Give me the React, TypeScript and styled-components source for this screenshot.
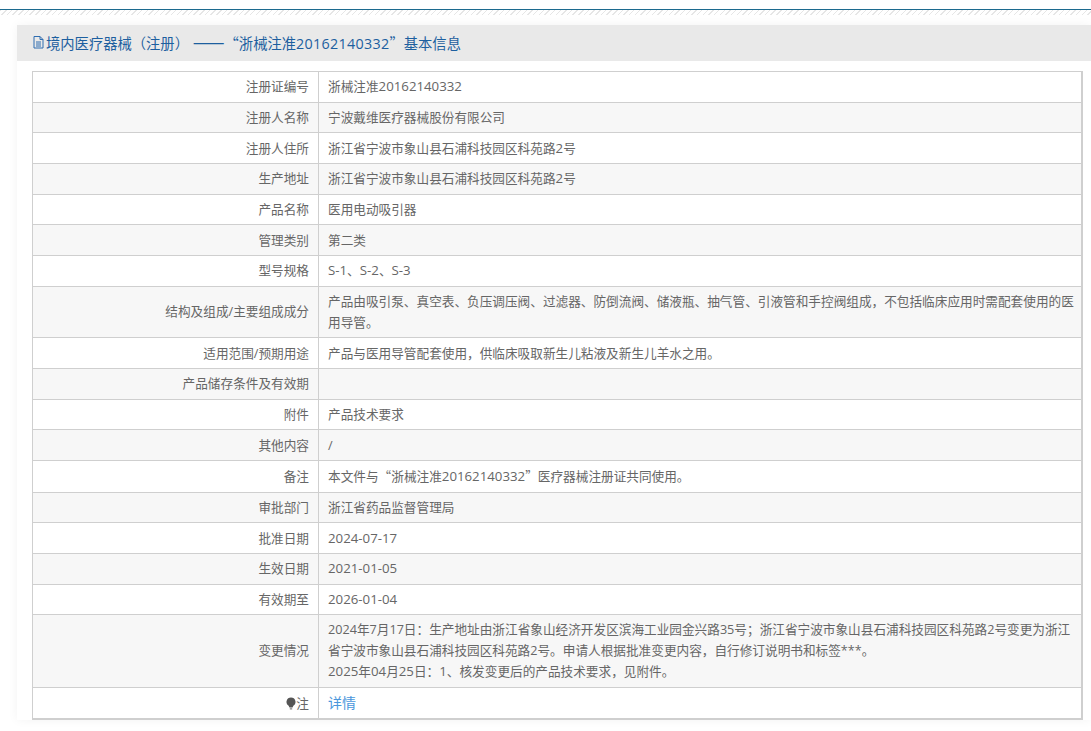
import React from "react";
import styled, { createGlobalStyle } from "styled-components";

type InfoRow = {
  label: React.ReactNode;
  value: React.ReactNode;
};

const GlobalStyle = createGlobalStyle`
  html, body {
    margin: 0;
    padding: 0;
    background: #fff;
    overflow: hidden;
    font-family: "Open Sans", "Noto Sans CJK SC", sans-serif;
  }
`;

const Page = styled.div`
  height: 731px;
  overflow: hidden;
  padding-top: 9px;
  box-sizing: border-box;
`;

const TopLine = styled.div`
  height: 1px;
  background: #1c6a8f;
`;

const Hatch = styled.div`
  height: 5px;
  background: repeating-linear-gradient(135deg, #e6e6e6 0 1px, #fff 1px 4px);
`;

const Main = styled.div`
  margin-left: 17px;
  margin-top: 10px;
  background: #fff;
  box-shadow: 0 0 10px rgba(0, 0, 0, 0.05);
`;

const PanelHeader = styled.div`
  height: 36px;
  background: #e9e9e9;
  display: flex;
  align-items: center;
  padding: 0 0 2px 15px;
  box-sizing: border-box;
  gap: 1px;
  color: #1d5f9f;
  font-size: 14.3px;
  white-space: pre;
`;

const HeaderDigits = styled.span`
  letter-spacing: 0.32px;
`;

const Dash = styled.span`
  font-family: "Noto Sans CJK SC", sans-serif;
  font-size: 19px;
  line-height: 1;
`;

const Quote = styled.span`
  font-family: "Noto Sans CJK SC", sans-serif;
`;

const Latin = styled.span`
  font-size: 13.25px;
`;

const Table = styled.table`
  margin: 10px 8px 0 15px;
  width: 1051px;
  border-collapse: collapse;
  table-layout: fixed;
  border: 1px solid #cfcfcf;
  border-right-width: 2px;
  border-bottom-width: 2px;
  font-size: 12.65px;
  line-height: 21px;
  color: #666;
`;

const Row = styled.tr<{ $shaded: boolean }>`
  background: ${(p) => (p.$shaded ? "#f7f7f7" : "#fff")};
`;

const LabelCell = styled.td`
  width: 286px;
  box-sizing: border-box;
  border: 1px solid #cfcfcf;
  padding: 4.33px 9px;
  text-align: right;
`;

const ValueCell = styled.td`
  border: 1px solid #cfcfcf;
  padding: 4.33px 6px 4.33px 9px;
  text-align: left;
`;

const DetailLink = styled.a`
  color: #4a97dc;
  font-size: 14px;
  text-decoration: none;
`;

const DocIcon = () => (
  <svg width="13" height="14" viewBox="0 0 13 14" fill="none" stroke="#2f6db0" strokeWidth="1">
    <path d="M2 1.5h6l3 3v8.5H2z" />
    <path d="M8 1.5v3h3M4 7h5M4 9h5M4 11h5" />
  </svg>
);

const BulbIcon = () => (
  <svg width="10" height="13" viewBox="0 0 10 13" style={{ verticalAlign: "-2px" }}>
    <path d="M5 0.5a4.5 4.5 0 0 1 2.4 8.3L6.5 10.5h-3L2.6 8.8A4.5 4.5 0 0 1 5 0.5z" fill="#555" />
    <path d="M3.8 11.2h2.4v1.3H3.8z" fill="#888" />
  </svg>
);

// digits and latin letters run a little wider than the chinese text around them
const mixed = (text: string) =>
  text.split(/([0-9A-Za-z\-*]+)/).map((part, i) => (i % 2 ? <Latin key={i}>{part}</Latin> : part));

const rows: InfoRow[] = [
  { label: "注册证编号", value: mixed("浙械注准20162140332") },
  { label: "注册人名称", value: "宁波戴维医疗器械股份有限公司" },
  { label: "注册人住所", value: mixed("浙江省宁波市象山县石浦科技园区科苑路2号") },
  { label: "生产地址", value: mixed("浙江省宁波市象山县石浦科技园区科苑路2号") },
  { label: "产品名称", value: "医用电动吸引器" },
  { label: "管理类别", value: "第二类" },
  { label: "型号规格", value: mixed("S-1、S-2、S-3") },
  {
    label: "结构及组成/主要组成成分",
    value:
      "产品由吸引泵、真空表、负压调压阀、过滤器、防倒流阀、储液瓶、抽气管、引液管和手控阀组成，不包括临床应用时需配套使用的医用导管。",
  },
  { label: "适用范围/预期用途", value: "产品与医用导管配套使用，供临床吸取新生儿粘液及新生儿羊水之用。" },
  { label: "产品储存条件及有效期", value: "" },
  { label: "附件", value: "产品技术要求" },
  { label: "其他内容", value: "/" },
  {
    label: "备注",
    value: (
      <>
        本文件与<Quote>“</Quote>
        {mixed("浙械注准20162140332")}
        <Quote>”</Quote>医疗器械注册证共同使用。
      </>
    ),
  },
  { label: "审批部门", value: "浙江省药品监督管理局" },
  { label: "批准日期", value: mixed("2024-07-17") },
  { label: "生效日期", value: mixed("2021-01-05") },
  { label: "有效期至", value: mixed("2026-01-04") },
  {
    label: "变更情况",
    value: (
      <>
        2024年7月17日：生产地址由浙江省象山经济开发区滨海工业园金兴路35号；浙江省宁波市象山县石浦科技园区科苑路2号变更为浙江省宁波市象山县石浦科技园区科苑路2号。申请人根据批准变更内容，自行修订说明书和标签***。
        <br />
        {mixed("2025年04月25日：1、核发变更后的产品技术要求，见附件。")}
      </>
    ),
  },
  {
    label: (
      <>
        <BulbIcon />注
      </>
    ),
    value: <DetailLink href="#">详情</DetailLink>,
  },
];

const App: React.FC = () => {
  return (
    <Page>
      <GlobalStyle />
      <TopLine />
      <Hatch />
      <Main>
        <PanelHeader>
          <DocIcon />
          <span>
            境内医疗器械（注册） <Dash>——</Dash>
            <Quote>“</Quote>浙械注准<HeaderDigits>20162140332</HeaderDigits>
            <Quote>”</Quote>基本信息
          </span>
        </PanelHeader>
        <Table>
          <tbody>
            {rows.map((row, index) => (
              <Row key={index} $shaded={index % 2 === 1}>
                <LabelCell>{row.label}</LabelCell>
                <ValueCell>{row.value}</ValueCell>
              </Row>
            ))}
          </tbody>
        </Table>
      </Main>
    </Page>
  );
};

export default App;
